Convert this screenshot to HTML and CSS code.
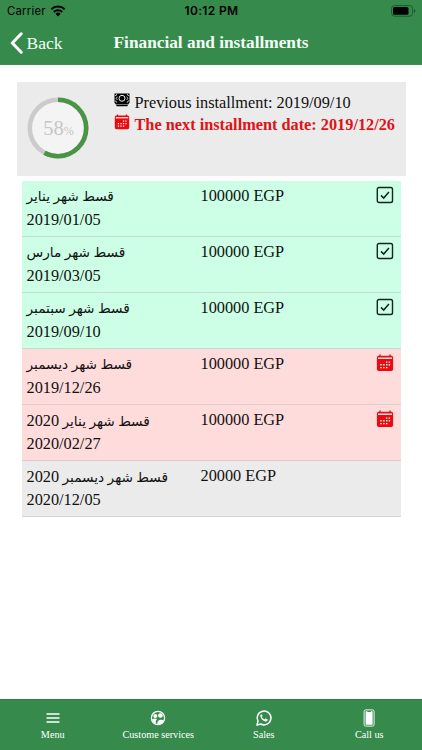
FILE: index.html
```html
<!DOCTYPE html>
<html lang="en">
<head>
<meta charset="utf-8">
<title>Financial and installments</title>
<link rel="stylesheet" href="styles.css">
</head>
<body>
<svg class="defs" aria-hidden="true">
  <symbol id="calendar" viewBox="0 0 18 18">
    <path d="M2.6 1.8h12.8a1.7 1.7 0 0 1 1.7 1.7v11.8a1.8 1.8 0 0 1-1.8 1.8H2.7a1.8 1.8 0 0 1-1.8-1.8V3.500a1.700 1.700 0 0 1 1.700-1.700z" fill="#e80c10"/>
    <path d="M4 .5v2M14 .5v2" stroke="#e80c10" stroke-width="1.400"/>
    <path d="M2 4.200h14" stroke="#fbdcdc" stroke-width="1.500"/>
    <path d="M10 8.100h1.400M12.700 8.100h1.400M4.300 10.800h1.400M7.200 10.800h1.400M10 10.800h1.400M12.700 10.800h1.400M4.300 13.600h1.400M7.200 13.600h1.400M10 13.600h1.400" stroke="#fff" stroke-width="1.400"/>
  </symbol>
  <symbol id="check" viewBox="0 0 18 18">
    <rect x="1.300" y="1.500" width="15.200" height="15" rx="1.800" fill="none" stroke="#14261d" stroke-width="1.400"/>
    <path d="M5 9.400l2.700 2.700 5.200-6.100" fill="none" stroke="#14261d" stroke-width="1.500"/>
  </symbol>
</svg>
<div class="app">
  <header class="header">
    <div class="status">
      <span class="carrier">Carrier
        <svg class="wifi" viewBox="0 0 16 12"><path d="M1.300 4.200a9.800 9.800 0 0 1 13.400 0M3.700 6.900a6.300 6.300 0 0 1 8.600 0" fill="none" stroke="#000" stroke-width="2"/><path d="M5.400 8.700a3.900 3.900 0 0 1 5.200 0L8 11.500z"/></svg>
      </span>
      <span class="clock">10:12 PM</span>
      <svg class="battery" viewBox="0 0 25 12"><rect x=".6" y=".6" width="21" height="10.600" rx="2.800" fill="none" stroke="#1b5a2f" stroke-width="1"/><rect x="2" y="2" width="15.500" height="7.800" rx="1.500"/><path d="M23 4v4q1.500-.6 1.500-2T23 4z" fill="#1b5a2f"/></svg>
    </div>
    <div class="bar">
      <a class="back"><svg class="chevron" viewBox="0 0 13 22"><path d="M11.200 1.800L2.300 11l8.900 9.200" fill="none" stroke="#fff" stroke-width="3" stroke-linecap="round" stroke-linejoin="round"/></svg><span>Back</span></a>
      <h1 class="title">Financial and installments</h1>
    </div>
  </header>

  <main class="content">
    <section class="summary">
      <svg class="donut" viewBox="0 0 62 62">
        <circle cx="31" cy="31" r="28.200" fill="#f4f4f4" stroke="#cbcbcb" stroke-width="4.600"/>
        <circle cx="31" cy="31" r="28.200" fill="none" stroke="#4b9446" stroke-width="4.600" pathLength="100" stroke-dasharray="58 42" transform="rotate(-90 31 31)"/>
        <text x="16.300" y="38" class="value">58</text><text x="36.700" y="38" class="unit">%</text>
      </svg>
      <div class="dates">
        <p class="date">
          <svg class="icon money" viewBox="0 0 16 14"><path d="M.5.500h15v9.600H.5z"/><path d="M1 10h14l-1.700 3.300H2.700z"/><path d="M.8 2.800a2 2 0 0 0 2-2M15.200 2.800a2 2 0 0 1-2-2M.8 7.800a2 2 0 0 1 2 2M15.200 7.800a2 2 0 0 0-2 2M3.300 3.600l-1.100 1.700L3.300 7M12.700 3.600l1.100 1.700L12.700 7" fill="none" stroke="#ebebeb" stroke-width=".8"/><circle cx="8" cy="5.300" r="3" fill="none" stroke="#ebebeb"/><path d="M1.500 11.500h13" stroke="#ebebeb" stroke-width=".5"/></svg>
          <span>Previous installment: 2019/09/10</span>
        </p>
        <p class="date next">
          <svg class="icon"><use href="#calendar"/></svg>
          <span>The next installment date: 2019/12/26</span>
        </p>
      </div>
    </section>

    <section class="list">
      <div class="row paid"><div class="name"><span class="ar" lang="ar">قسط شهر يناير</span><span>2019/01/05</span></div><span class="amount">100000 EGP</span><svg class="state"><use href="#check"/></svg></div>
      <div class="row paid"><div class="name"><span class="ar" lang="ar">قسط شهر مارس</span><span>2019/03/05</span></div><span class="amount">100000 EGP</span><svg class="state"><use href="#check"/></svg></div>
      <div class="row paid"><div class="name"><span class="ar" lang="ar">قسط شهر سبتمبر</span><span>2019/09/10</span></div><span class="amount">100000 EGP</span><svg class="state"><use href="#check"/></svg></div>
      <div class="row due"><div class="name"><span class="ar" lang="ar">قسط شهر ديسمبر</span><span>2019/12/26</span></div><span class="amount">100000 EGP</span><svg class="state"><use href="#calendar"/></svg></div>
      <div class="row due"><div class="name"><span class="ar" lang="ar" dir="rtl">قسط شهر يناير <b>2020</b></span><span>2020/02/27</span></div><span class="amount">100000 EGP</span><svg class="state"><use href="#calendar"/></svg></div>
      <div class="row"><div class="name"><span class="ar" lang="ar" dir="rtl">قسط شهر ديسمبر <b>2020</b></span><span>2020/12/05</span></div><span class="amount">20000 EGP</span></div>
    </section>
  </main>

  <nav class="tabs">
    <a class="tab"><svg class="glyph" viewBox="0 0 18 18"><path d="M2.500 5h13M2.500 9h13M2.500 13h13" stroke="#fff" stroke-width="1.700"/></svg><span>Menu</span></a>
    <a class="tab"><svg class="glyph" viewBox="0 0 18 18"><circle cx="9" cy="9" r="6.600" fill="none" stroke="#fff" stroke-width="1.300"/><circle cx="6.300" cy="6.900" r="2" fill="#fff"/><circle cx="11.400" cy="6.500" r="2.300" fill="#fff"/><path d="M3 10.400q3-1.800 5-.3-1.800 1.700-1.300 4.800Q3.700 13.700 3 10.400zM8.200 15.300q-.2-4 3.300-4.500 2.200-.2 3.500 1-1.700 3.500-6.800 3.500z" fill="#fff"/></svg><span>Custome services</span></a>
    <a class="tab"><svg class="glyph" viewBox="0 0 18 18"><path d="M1.900 16.100l1.100-3.800A6.900 6.900 0 1 1 5.700 15z" fill="none" stroke="#fff" stroke-width="1.500" stroke-linejoin="round"/><path d="M6.300 5.200c-.8.500-1.200 1.300-.9 2.300.7 2.500 2.600 4.300 5 4.900 1.100.2 2.100-.4 2.300-1.300v-.6l-1.900-1-.5.100-.7.900c-1.300-.4-2.200-1.200-2.800-2.400l.6-.8.100-.4-.7-1.700z" fill="#fff"/></svg><span>Sales</span></a>
    <a class="tab"><svg class="glyph" viewBox="0 0 18 18"><rect x="4.100" y=".9" width="10" height="16.200" rx="1.500" fill="none" stroke="#fff" stroke-width=".9"/><path d="M5.600 2.300h1.600l.5.600h2.800l.5-.6h1.600v13.400h-7z" fill="#fff"/></svg><span>Call us</span></a>
  </nav>
</div>
</body>
</html>
```
FILE: styles.css
```css
* { box-sizing: border-box; }
body { margin: 0; background: #fff; color: #111; font-family: "Liberation Serif", "DejaVu Sans", serif; font-size: 16.3px; }
.defs { display: none; }
.app { height: 750px; display: flex; flex-direction: column; overflow: hidden; }
.header { height: 65px; background: #368b4c; border-bottom: 1px solid #3f8f54; flex: none; }
.status { height: 21px; padding: 0 6px 0 7px; display: grid; grid-template-columns: 1fr auto 1fr; align-items: center; color: #000; font-family: Inter, sans-serif; }
.carrier { font-size: 11.3px; letter-spacing: .25px; display: flex; align-items: center; gap: 4px; }
.wifi { width: 16px; height: 12px; }
.clock { font-size: 12px; font-weight: 600; letter-spacing: .35px; }
.battery { width: 25px; height: 12px; justify-self: end; }
.bar { height: 44px; display: grid; grid-template-columns: 1fr auto 1fr; align-items: center; color: #f5fff6; }
.back { display: flex; align-items: center; gap: 4px; padding-left: 9.500px; font-size: 17.5px; }
.chevron { width: 13px; height: 22px; }
.title { margin: 0; font-size: 17.3px; line-height: 22px; font-weight: bold; }
.content { flex: 1; padding: 17px 16px 0; }
.summary { height: 93.5px; background: #ebebeb; display: flex; padding-left: 11px; margin-left: .5px; }
.donut { width: 62px; height: 62px; margin: 15px 0 0 -.5px; flex: none; }
.value { font-size: 20.500px; fill: #c6c6c6; }
.unit { font-size: 12px; fill: #c6c6c6; }
.dates { margin: 10px 0 0 25px; }
.date { margin: 0; height: 21.500px; line-height: 21.500px; display: flex; gap: 4.5px; white-space: nowrap; }
.icon { width: 16px; height: 16px; flex: none; }
.money { height: 14px; margin-top: 1px; }
.next { color: #e01216; font-weight: bold; }
.list { margin: 5.5px 5.500px 0; }
.row { height: 56px; border-bottom: 1.500px solid #d5d5d5; background: #ebebeb; display: grid; grid-template-columns: 174px 1fr 18px; padding: 5px 7px 0 5px; }
.paid { background: #ccffe5; border-color: #c4ddd0; }
.due { background: #ffdcdc; border-color: #e0cccc; }
.name { display: flex; flex-direction: column; align-items: flex-start; line-height: 23px; margin-top: -1px; }
.name span { height: 23px; white-space: nowrap; }
.name .ar { font-size: 13.7px; }
.ar b { font-weight: normal; font-size: 16.3px; }
.amount { line-height: 21px; margin-top: -1px; }
.state { width: 18px; height: 18px; }
.tabs { height: 51.500px; flex: none; background: #368b4c; border-top: 1px solid #2f7f44; display: grid; grid-template-columns: repeat(4, 1fr); color: #fff; }
.tab { display: flex; flex-direction: column; align-items: center; padding-top: 9px; font-size: 10.2px; line-height: 12px; gap: 2px; }
.glyph { width: 18px; height: 18px; }
```
